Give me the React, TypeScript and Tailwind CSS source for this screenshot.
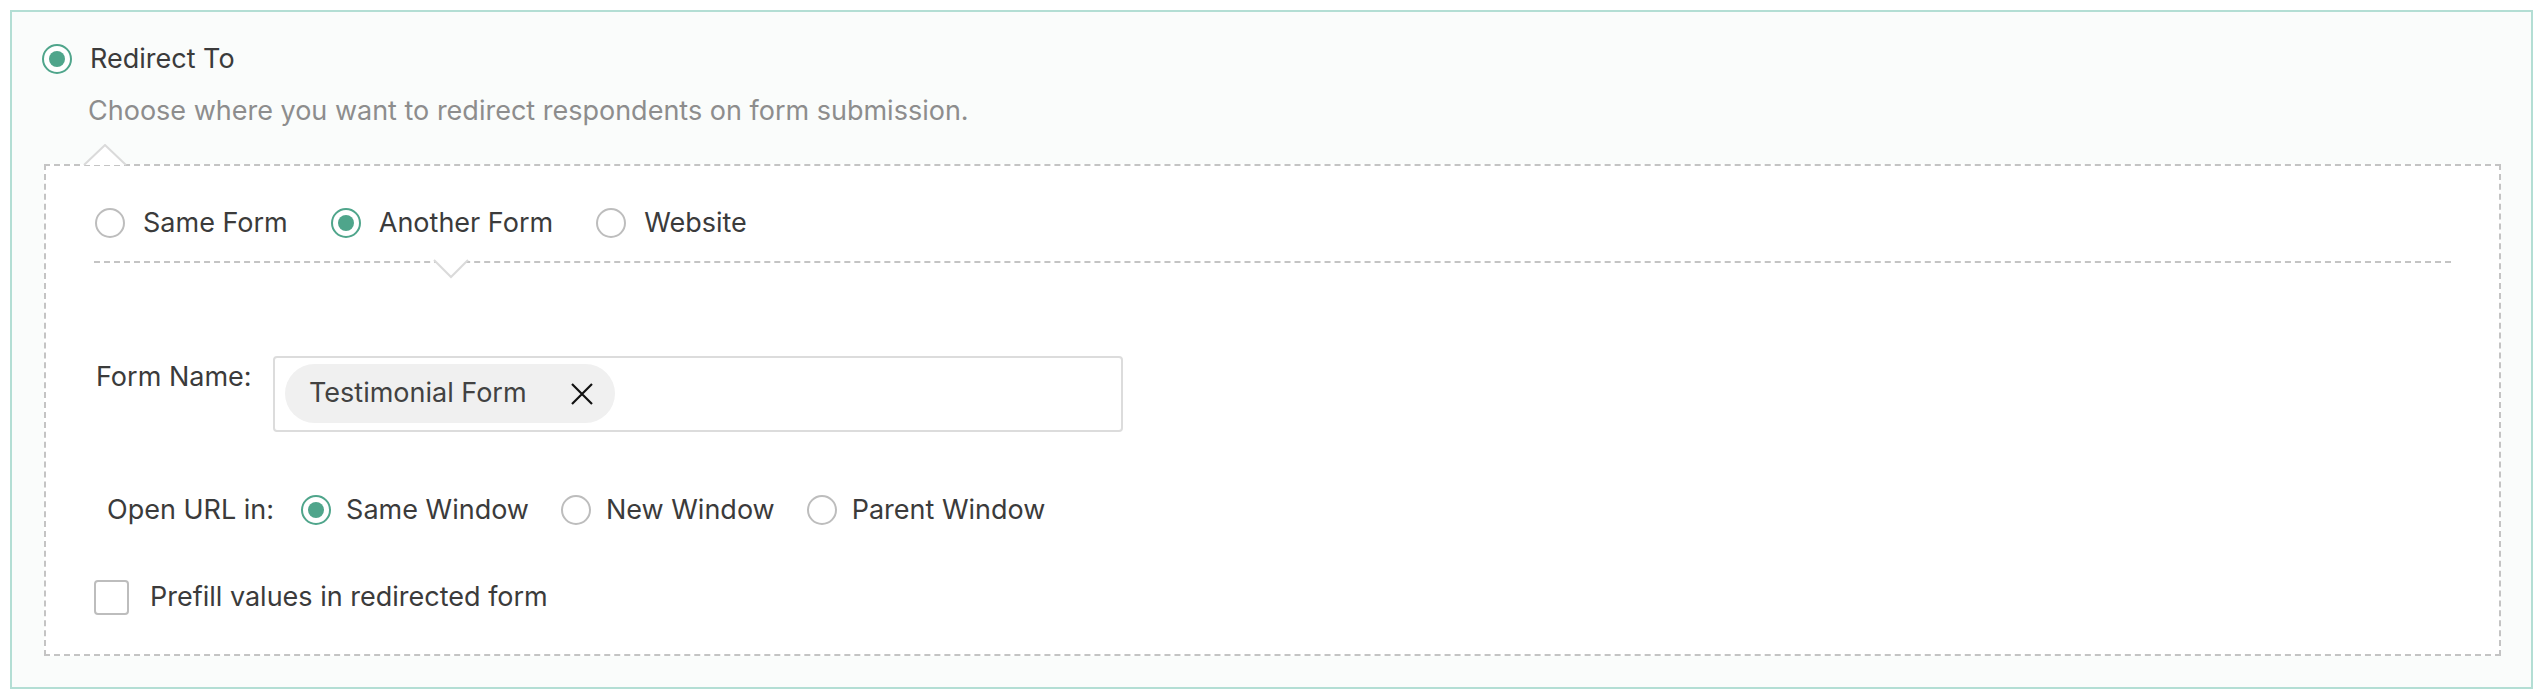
import { useState } from "react";

function Radio({ checked }: { checked?: boolean }) {
    return (
        <span
            className={
                checked
                    ? "w-[30px] h-[30px] shrink-0 rounded-full border-2 border-[#4fa58b] bg-white flex items-center justify-center"
                    : "w-[30px] h-[30px] shrink-0 rounded-full border-2 border-[#bdbdbd] bg-white"
            }
        >
            {checked && <span className="w-[16px] h-[16px] rounded-full bg-[#4fa58b]" />}
        </span>
    );
}

export default function App() {
    const [target, setTarget] = useState("Another Form");
    const [openIn, setOpenIn] = useState("Same Window");

    const targets = ["Same Form", "Another Form", "Website"];
    const windows = ["Same Window", "New Window", "Parent Window"];

    return (
        <div className="min-h-screen bg-white pt-[10px] pl-[10px] font-['Inter',sans-serif] text-[27px] text-[#3b3b3b]">
            <div className="w-[2523px] h-[679px] border-2 border-[#b3ded4] bg-[#fafcfb] pt-[32px] pl-[30px]">
                {/* header */}
                <div className="flex items-center gap-[18px] h-[30px]">
                    <Radio checked />
                    <span className="leading-[36px]">Redirect To</span>
                </div>
                <p className="mt-[19px] ml-[46px] leading-[36px] text-[#8d8d8d]">
                    Choose where you want to redirect respondents on form submission.
                </p>

                {/* dashed panel */}
                <div className="relative mt-[35px] ml-[2px] w-[2457px] h-[492px] border-2 border-dashed border-[#c4c4c4] bg-white px-[48px]">
                    <svg className="absolute left-[37px] top-[-22px]" width="44" height="22" viewBox="0 0 44 22">
                        <polyline points="1,21 22,1 43,21" fill="#ffffff" stroke="#dadada" strokeWidth="2" />
                    </svg>

                    <div className="relative flex items-center pt-[42px] pb-[23px] border-b-2 border-dashed border-[#c4c4c4]">
                        {targets.map((t) => (
                            <label
                                key={t}
                                onClick={() => setTarget(t)}
                                className="flex items-center gap-[18px] mr-[42px] pl-[1px] cursor-pointer"
                            >
                                <Radio checked={target === t} />
                                <span className="leading-[30px]">{t}</span>
                            </label>
                        ))}
                        <svg className="absolute left-[339px] top-[calc(100%-2px)]" width="36" height="20" viewBox="0 0 36 20">
                            <polyline points="1,1 18,18 35,1" fill="#ffffff" stroke="#dadada" strokeWidth="2" />
                        </svg>
                    </div>

                    {/* form name */}
                    <div className="flex items-start mt-[93px]">
                        <span className="w-[179px] pl-[2px] pt-[3px] leading-[36px]">Form Name:</span>
                        <div className="w-[850px] h-[76px] border-2 border-[#dcdcdc] rounded-[4px] bg-white pl-[10px] pt-[6px]">
                            <div className="w-[330px] h-[59px] rounded-full bg-[#f0f0f0] pl-[24px] pr-[22px] flex items-center justify-between text-[#424242]">
                                <span>Testimonial Form</span>
                                <svg width="22" height="22" viewBox="0 0 22 22">
                                    <path d="M1 1 21 21M21 1 1 21" stroke="#111" strokeWidth="2.2" />
                                </svg>
                            </div>
                        </div>
                    </div>

                    {/* open url */}
                    <div className="flex items-center mt-[63px] pl-[13px] h-[30px]">
                        <span className="mr-[27px]">Open URL in:</span>
                        {windows.map((w) => (
                            <label
                                key={w}
                                onClick={() => setOpenIn(w)}
                                className="flex items-center gap-[15px] mr-[32px] cursor-pointer"
                            >
                                <Radio checked={openIn === w} />
                                <span>{w}</span>
                            </label>
                        ))}
                    </div>

                    {/* prefill */}
                    <div className="flex items-center gap-[21px] mt-[52px]">
                        <span className="w-[35px] h-[35px] rounded-[4px] border-2 border-[#bdbdbd] bg-white" />
                        <span>Prefill values in redirected form</span>
                    </div>
                </div>
            </div>
        </div>
    );
}
